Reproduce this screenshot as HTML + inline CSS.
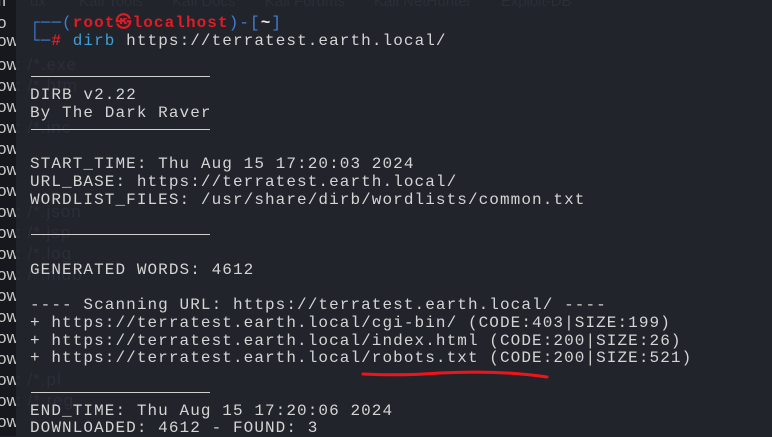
<!DOCTYPE html>
<html><head><meta charset="utf-8"><style>
html,body{margin:0;padding:0;}
body{width:772px;height:436px;overflow:hidden;background:#22242c;position:relative;font-family:"Liberation Mono",monospace;}
.strip{position:absolute;left:0;top:0;width:16px;height:436px;background:#17181d;overflow:hidden;}
.l{position:absolute;left:30px;font-size:16px;letter-spacing:1.08px;color:#d4d4d4;white-space:pre;line-height:18px;}
.ghost{position:absolute;left:16px;font-size:17px;letter-spacing:1px;color:#2b2e37;white-space:pre;line-height:18px;font-family:"Liberation Sans",sans-serif;}
.ow{position:absolute;left:-3px;font-size:17px;color:#c8c8c8;font-family:"Liberation Sans",sans-serif;line-height:18px;}
.sep{position:absolute;left:31px;width:179px;height:1px;background:#cfcfcf;}
.top{position:absolute;top:-7px;left:30px;font-size:15px;color:#2b2e36;font-family:"Liberation Sans",sans-serif;white-space:pre;}
.b{color:#3d7fd6}.r{color:#e01b24;font-weight:bold}.c{color:#3e9fd6}
</style></head><body>
<div class="top">ux        Kali Tools       Kali Docs       Kali Forums       Kali NetHunter       Exploit-DB</div>
<div class="strip">
<div class="ow" style="top:-8px">ıı</div>
<div class="ow" style="top:14px">o</div>
<div class="ow" style="top:32px">ow</div>
<div class="ow" style="top:56px">ow</div>
<div class="ow" style="top:77px">ow</div>
<div class="ow" style="top:98px">ow</div>
<div class="ow" style="top:119px">ow</div>
<div class="ow" style="top:140px">ow</div>
<div class="ow" style="top:161px">ow</div>
<div class="ow" style="top:182px">ow</div>
<div class="ow" style="top:203px">ow</div>
<div class="ow" style="top:224px">ow</div>
<div class="ow" style="top:245px">ow</div>
<div class="ow" style="top:266px">ow</div>
<div class="ow" style="top:287px">ow</div>
<div class="ow" style="top:308px">ow</div>
<div class="ow" style="top:329px">ow</div>
<div class="ow" style="top:350px">ow</div>
<div class="ow" style="top:371px">ow</div>
<div class="ow" style="top:392px">ow</div>
<div class="ow" style="top:413px">ow</div>
</div>
<div class="ghost" style="top:56px">: /*.exe</div>
<div class="ghost" style="top:77px">: /*.htm</div>
<div class="ghost" style="top:119px">: /*.inc</div>
<div class="ghost" style="top:203px">: /*.json</div>
<div class="ghost" style="top:224px">: /*.jsp</div>
<div class="ghost" style="top:245px">: /*.log</div>
<div class="ghost" style="top:266px">: /*.mdb</div>
<div class="ghost" style="top:371px">: /*.pl</div>
<div class="ghost" style="top:392px">: /*.reg</div>

<div class="l" style="top:14px;left:30px"><span class="b">┌──(</span><span class="r">root㉿localhost</span><span class="b">)-[</span><b style="color:#e8e8e8">~</b><span class="b">]</span></div>
<div class="l" style="top:32px;left:30px"><span class="b">└─</span><span class="r">#</span> <span class="c">dirb</span> https://terratest.earth.local/</div>
<div class="sep" style="top:76px"></div>
<div class="l" style="top:86px">DIRB v2.22</div>
<div class="l" style="top:104px">By The Dark Raver</div>
<div class="sep" style="top:129px"></div>
<div class="l" style="top:155px">START_TIME: Thu Aug 15 17:20:03 2024</div>
<div class="l" style="top:173px">URL_BASE: https://terratest.earth.local/</div>
<div class="l" style="top:191px">WORDLIST_FILES: /usr/share/dirb/wordlists/common.txt</div>
<div class="sep" style="top:234px"></div>
<div class="l" style="top:261px">GENERATED WORDS: 4612</div>
<div class="l" style="top:296px">---- Scanning URL: https://terratest.earth.local/ ----</div>
<div class="l" style="top:314px">+ https://terratest.earth.local/cgi-bin/ (CODE:403|SIZE:199)</div>
<div class="l" style="top:332px">+ https://terratest.earth.local/index.html (CODE:200|SIZE:26)</div>
<div class="l" style="top:349px">+ https://terratest.earth.local/robots.txt (CODE:200|SIZE:521)</div>
<svg style="position:absolute;left:0;top:0" width="772" height="436"><path d="M363 374 Q400 376 440 373 Q500 370 547 377" stroke="#f0141a" stroke-width="3" fill="none" stroke-linecap="round"/></svg>
<div class="sep" style="top:392px"></div>
<div class="l" style="top:402px">END_TIME: Thu Aug 15 17:20:06 2024</div>
<div class="l" style="top:419px">DOWNLOADED: 4612 - FOUND: 3</div>
</body></html>
